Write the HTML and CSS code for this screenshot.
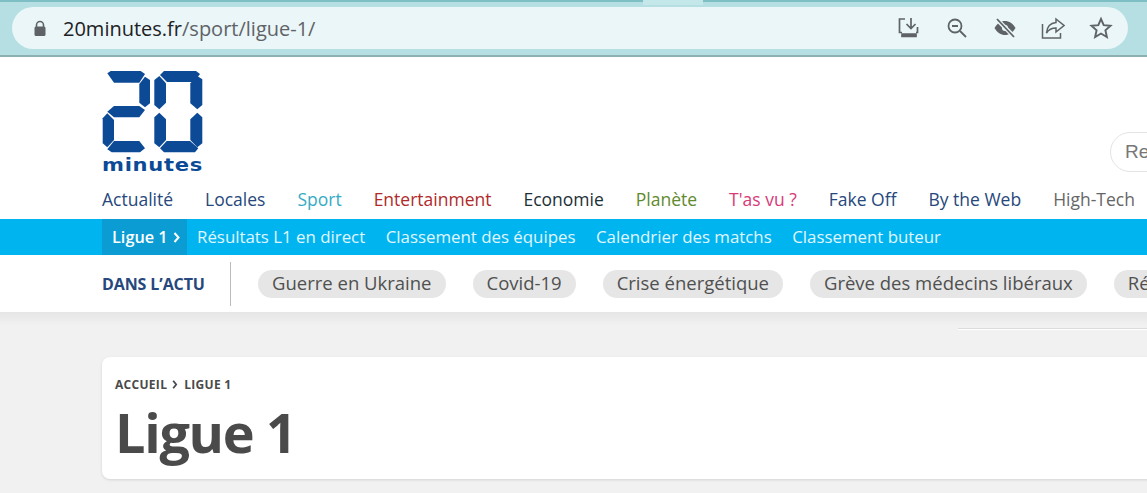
FILE: index.html
```html
<!DOCTYPE html>
<html lang="fr">
  <head>
    <meta charset="UTF-8" />
    <title>Ligue 1</title>
    <link rel="stylesheet" href="styles.css">
  </head>
  <body>
    <div class="browser">
      <div class="tabstrip"><div class="tab"></div></div>
      <div class="omnibox">
        <svg class="lock" width="14" height="17" viewBox="0 0 14 17"><path d="M3.5 7V5a3.5 3.5 0 0 1 7 0v2" fill="none" stroke="#5f6368" stroke-width="1.6"/><rect x="1.5" y="6.5" width="11" height="9.5" rx="1.5" fill="#5f6368"/></svg>
        <div class="url">20minutes.fr<span>/sport/ligue-1/</span></div>
        <div class="tools">
          <svg width="24" height="24" viewBox="0 0 24 24" fill="none" stroke="#5f6368" stroke-width="1.7"><path d="M8 3H2.500v13.500H5"/><path d="M20.500 11v5.500H19"/><path d="M14 2v10M9.500 8l4.500 4.500L18.500 8"/><path d="M5 18h14v2.500H5z" fill="#5f6368"/></svg>
          <svg width="24" height="24" viewBox="0 0 24 24" fill="none" stroke="#5f6368" stroke-width="1.8"><circle cx="10" cy="10" r="6.500"/><path d="M7 10h6M15 15l6 6"/></svg>
          <svg width="24" height="24" viewBox="0 0 24 24"><path d="M1.500 12C4 7.500 8 5 12 5s8 2.500 10.500 7c-2.500 4.500-6.500 7-10.500 7S4 16.500 1.500 12z" fill="#5f6368"/><circle cx="12" cy="12" r="3" fill="#eaf6f7"/><path d="M4 3.500l17 17" stroke="#eaf6f7" stroke-width="4.500"/><path d="M4 3l17 18" stroke="#5f6368" stroke-width="1.800"/></svg>
          <svg width="24" height="24" viewBox="0 0 24 24" fill="none" stroke="#5f6368" stroke-width="1.500"><path d="M1.500 8v14h18v-5"/><path d="M15 3l8 6.500-8 6.500v-4c-4 0-7 1-9.500 5 .5-6 4-10 9.500-10.500z"/></svg>
          <svg width="24" height="24" viewBox="0 0 24 24" fill="none" stroke="#5f6368" stroke-width="1.900"><path d="M12 3l2.700 6.200 6.800.6-5.100 4.500 1.500 6.700-5.900-3.500L6.100 21l1.500-6.700-5.100-4.500 6.800-.6z"/></svg>
        </div>
      </div>
    </div>

    <header class="top">
      <div class="brand">
        <div class="logo">
          <svg width="102" height="84" viewBox="0 0 102 84" fill="#0d4a96">
            <path d="M5.300 3.300 8.700 1h30l4.300 3-5.700 8.700H12z"/>
            <path d="M43 6.700 48 10v23.300l-5 4-5.700-4.600V14z"/>
            <path d="M5.300 41.700 12 36h25.300l5.700 4-5.700 7.300H12z"/>
            <path d="M.7 48.300l4.600-5L12 50v20l-6.700 7.300-4.600-4z"/>
            <path d="M5.300 79.300 12 71h25.300l5.700 7.300-5 4H9.700z"/>
            <path d="M58 5l4-4h32l4 3-6 8H65z"/>
            <path d="M52.300 10l5-4 6.700 7.300v19.400L57.300 39.300l-5-4.300z"/>
            <path d="M100.300 9.300l-5-3.300-7 7.300v20l7 6 5-4.300z"/>
            <path d="M52.300 47.300l5-4.600L64 49.300V70l-6.700 7.300-5-4z"/>
            <path d="M100.300 47.300l-5-4.600-7 6.600V70l7 7.300 5-4z"/>
            <path d="M58 78.300 64.700 71h23.300l8.300 7.300-3.300 4H62z"/>
          </svg>
          <span class="logo-word">minutes</span>
        </div>
        <div class="search">Re</div>
      </div>
      <nav class="mainnav">
        <a class="navy">Actualité</a>
        <a class="navy">Locales</a>
        <a class="sport">Sport</a>
        <a class="ent">Entertainment</a>
        <a class="eco">Economie</a>
        <a class="planete">Planète</a>
        <a class="tasvu">T'as vu ?</a>
        <a class="navy">Fake Off</a>
        <a class="navy">By the Web</a>
        <a class="tech">High-Tech</a>
      </nav>
    </header>

    <div class="subnav">
      <a class="current">Ligue 1<svg class="chev" width="7" height="11" viewBox="0 0 7 11"><path d="M1.500 1l4 4.500-4 4.500" fill="none" stroke="#fff" stroke-width="2"/></svg></a>
      <a>Résultats L1 en direct</a>
      <a>Classement des équipes</a>
      <a>Calendrier des matchs</a>
      <a>Classement buteur</a>
    </div>

    <div class="actu">
      <div class="actu-title">DANS L’ACTU</div>
      <div class="tags">
        <span>Guerre en Ukraine</span>
        <span>Covid-19</span>
        <span>Crise énergétique</span>
        <span>Grève des médecins libéraux</span>
        <span class="tag-more">Ré</span>
      </div>
    </div>

    <main class="content">
      <div class="rule"></div>
      <section class="card">
        <div class="crumbs">ACCUEIL<svg class="crumb-chev" width="6" height="9" viewBox="0 0 6 9"><path d="M1.200 .8l3 3.700-3 3.700" fill="none" stroke="#4a4a4a" stroke-width="1.800"/></svg>LIGUE 1</div>
        <h1>Ligue 1</h1>
      </section>
    </main>
  </body>
</html>
```

FILE: styles.css
```css
*{
    margin: 0;
    padding: 0;
    box-sizing: border-box;
}
html, body{
    height: 100%;
    overflow: hidden;
}
body{
    font-family: "Open Sans", "Noto Sans", sans-serif;
    background: #f1f1f1;
    width: 1147px;
}
.browser{
    height: 57px;
    background: #b5dfe2;
    border-bottom: 2px solid #8fb0b3;
}
.tabstrip{
    height: 7px;
    border-top: 2px solid #7dbfc4;
}
.tab{
    width: 60px;
    height: 5px;
    margin-left: 643px;
    margin-top: -2px;
    background: #c4e8ea;
}
.omnibox{
    display: flex;
    align-items: center;
    height: 42px;
    margin: 0 19px 0 12px;
    padding: 0 15px 0 21px;
    background: #eaf6f7;
    border-radius: 21px;
}
.lock{
    margin-right: 16px;
}
.url{
    flex: 1;
    font-size: 20px;
    color: #202124;
}
.url span{
    color: #5f6368;
}
.tools{
    display: flex;
    gap: 24px;
}
.top{
    background: #fff;
    height: 162px;
    padding-left: 102px;
}
.brand{
    display: flex;
    justify-content: space-between;
    height: 130px;
    padding-top: 13px;
}
.logo{
    width: 102px;
    line-height: 1;
}
.logo svg{
    display: block;
}
.logo-word{
    display: block;
    margin-top: 2px;
    font-family: "DejaVu Sans", sans-serif;
    font-weight: 700;
    font-size: 18px;
    letter-spacing: 0.6px;
    color: #0d4a96;
    white-space: nowrap;
    transform: scaleX(1.17);
    transform-origin: left center;
}
.search{
    align-self: flex-start;
    flex-shrink: 0;
    width: 120px;
    height: 40px;
    margin-top: 62px;
    margin-right: -83px;
    padding: 8px 14px;
    border: 1px solid #e4e4e4;
    border-radius: 20px;
    font-family: "Liberation Sans", sans-serif;
    font-size: 19px;
    color: #777;
}
.mainnav{
    display: flex;
    gap: 32px;
    font-size: 17.5px;
    font-weight: 500;
    line-height: 24px;
    white-space: nowrap;
}
.navy{ color: #26487c; }
.sport{ color: #36abc4; }
.ent{ color: #b02a2a; }
.eco{ color: #1c3038; }
.planete{ color: #5f8a2e; }
.tasvu{ color: #d83a78; }
.tech{ color: #666; }
.subnav{
    display: flex;
    height: 36px;
    padding-left: 102px;
    gap: 20.5px;
    background: #00b4f0;
    color: #e0f6fd;
    font-size: 16.85px;
    line-height: 36px;
    white-space: nowrap;
}
.subnav .current{
    flex-shrink: 0;
    width: 85px;
    margin-right: -10.5px;
    padding-left: 10px;
    background: #0a9cd2;
    color: #fff;
    font-size: 16.3px;
    font-weight: 600;
}
.chev{
    margin-left: 5px;
}
.actu{
    display: flex;
    align-items: center;
    height: 57px;
    padding-left: 102px;
    background: #fff;
    white-space: nowrap;
}
.actu-title{
    display: flex;
    flex-shrink: 0;
    align-items: center;
    width: 129px;
    height: 44px;
    border-right: 1px solid #bbb;
    font-size: 16px;
    font-weight: 700;
    letter-spacing: -0.1px;
    color: #26487c;
}
.tags{
    display: flex;
    gap: 27px;
    margin-left: 27px;
}
.tags span{
    flex-shrink: 0;
    padding: 0 14px;
    height: 28px;
    border-radius: 14px;
    background: #e6e6e6;
    color: #505050;
    font-size: 18.5px;
    line-height: 26px;
}
.tags .tag-more{
    width: 60px;
}
.content{
    padding-left: 102px;
    background: linear-gradient(#e6e6e6, #f1f1f1 14px);
    height: 181px;
}
.rule{
    height: 1px;
    margin-left: 856px;
    margin-bottom: 28px;
    position: relative;
    top: 16px;
    background: #dcdcdc;
    box-shadow: 0 1px 0 #fff;
}
.card{
    height: 122px;
    margin-top: 44px;
    margin-right: -20px;
    padding: 20px 13px;
    background: #fff;
    border-radius: 8px;
    box-shadow: 0 1px 3px rgba(0, 0, 0, 0.12);
    color: #4a4a4a;
}
.crumbs{
    font-size: 12px;
    font-weight: 700;
    line-height: 16px;
    letter-spacing: 0.3px;
}
.crumb-chev{
    margin: 0 6px 0 5px;
}
h1{
    font-size: 54px;
    font-weight: 700;
    letter-spacing: -1.3px;
    line-height: 72px;
    margin-top: 3px;
}
```
